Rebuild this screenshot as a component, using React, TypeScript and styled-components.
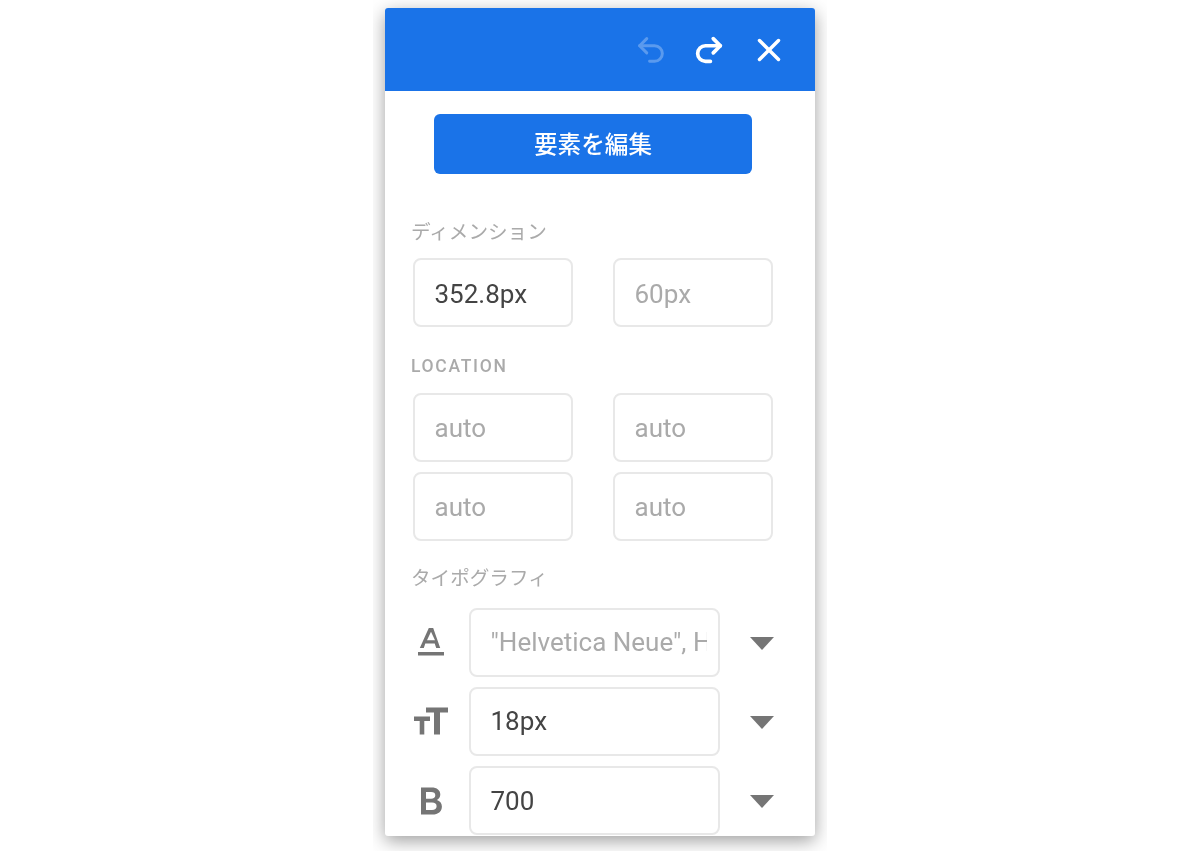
import React from "react";
import styled, { createGlobalStyle } from "styled-components";
import { Undo2, Redo2, X } from "lucide-react";

const Global = createGlobalStyle`
  html, body { margin: 0; padding: 0; background: #fff; }
  body { font-family: Roboto, "Noto Sans CJK JP", sans-serif; }
`;

const Page = styled.div`
  width: 1200px;
  height: 851px;
  display: flex;
  justify-content: center;
  overflow: hidden;
  background: #fff;
`;

const Stage = styled.div`
  width: 454px;
  height: 851px;
  padding: 8px 12px 15px;
  box-sizing: border-box;
  overflow: hidden;
`;

const Panel = styled.div`
  width: 430px;
  height: 828px;
  background: #fff;
  border-radius: 3px;
  overflow: hidden;
  box-shadow: 0 5px 18px rgba(0, 0, 0, 0.38);
  filter: blur(0.55px);
`;

const Header = styled.div`
  height: 83px;
  background: #1a73e8;
  display: flex;
  align-items: center;
  justify-content: flex-end;
  gap: 24px;
  padding: 0 27px 0 0;
`;

const HeaderIcon = styled.span<{ $dim?: boolean }>`
  display: flex;
  color: #fff;
  opacity: ${(p) => (p.$dim ? 0.28 : 1)};
`;

const Body = styled.div`
  padding: 23px 0 0 26px;
`;

const Primary = styled.button`
  display: block;
  width: 318px;
  height: 60px;
  margin: 0 0 45px 23px;
  padding: 0 0 3px;
  border: 0;
  border-radius: 6px;
  background: #1a73e8;
  color: #fff;
  font: 500 23.6px Roboto, "Noto Sans CJK JP", sans-serif;
`;

const Label = styled.div<{ $latin?: boolean }>`
  height: 28px;
  line-height: 28px;
  color: #aaa;
  font-size: ${(p) => (p.$latin ? "17.5px" : "19.6px")};
  font-weight: ${(p) => (p.$latin ? 500 : 400)};
  letter-spacing: ${(p) => (p.$latin ? "1.7px" : "0")};
`;

const Grid = styled.div<{ $top: number }>`
  display: grid;
  grid-template-columns: 160px 160px;
  column-gap: 40px;
  row-gap: 10px;
  margin: ${(p) => p.$top}px 0 0 2px;
`;

const Field = styled.div<{ $muted?: boolean; $low?: boolean }>`
  height: 69px;
  box-sizing: border-box;
  border: 2px solid #e8e8e8;
  border-radius: 8px;
  padding: ${(p) => (p.$low ? "3px" : "0")} 11px 0 19.5px;
  display: flex;
  align-items: center;
  font-size: 26px;
  color: ${(p) => (p.$muted ? "#aaa" : "#444")};
`;

const Value = styled.span`
  display: block;
  flex: 1;
  min-width: 0;
  line-height: 36px;
  overflow: hidden;
  white-space: nowrap;
`;

const Section = styled.div<{ $top: number }>`
  margin-top: ${(p) => p.$top}px;
`;

const Rows = styled.div`
  display: flex;
  flex-direction: column;
  gap: 10.3px;
  margin-top: 15px;
`;

const Row = styled.div`
  display: grid;
  grid-template-columns: 40px 251px 56px;
  column-gap: 18px;
  align-items: center;
`;

const TypeIcon = styled.span`
  display: flex;
  justify-content: center;
`;

const Arrow = styled.span`
  width: 0;
  height: 0;
  margin: 2px 0 0 12px;
  border-left: 12.5px solid transparent;
  border-right: 12.5px solid transparent;
  border-top: 13px solid #757575;
`;

const locationFields = ["auto", "auto", "auto", "auto"];

const FontIcon = () => (
  <svg width="30" height="30" viewBox="0 0 30 30" fill="#757575">
    <path
      fillRule="evenodd"
      d="M12.8 1h4.4l7 20h-4l-1.5-4.5H9.300L7.8 21h-4zM11 13.200h8L15 4.800z"
    />
    <rect x="2" y="25" width="26" height="3.500" />
  </svg>
);

const SizeIcon = () => (
  <svg width="36" height="30" viewBox="0 0 36 30" fill="#757575">
    <path d="M13 1.500h22v5h-8v22h-6v-22h-8z" />
    <path d="M1 10.500h16v4.500h-5.700v13.500H6.700V15H1z" />
  </svg>
);

const BoldIcon = () => (
  <svg width="26" height="30" viewBox="0 0 26 30" fill="#757575">
    <path
      fillRule="evenodd"
      d="M3 1.500h10.500c5.500 0 8.800 2.700 8.800 7 0 2.600-1.300 4.500-3.400 5.500 2.900.9 5 3.200 5 6.400 0 5-3.800 8.100-9.400 8.100H3zM8 6v6.700h5.100c2.700 0 4.200-1.300 4.200-3.500 0-2-1.500-3.200-4.200-3.200zM8 16.500V24h6c3 0 4.600-1.400 4.600-3.800 0-2.400-1.600-3.700-4.600-3.700z"
    />
  </svg>
);

const rows = [
  { icon: <FontIcon />, text: '"Helvetica Neue", Helvetica', muted: true },
  { icon: <SizeIcon />, text: "18px" },
  { icon: <BoldIcon />, text: "700" },
];

export default function App() {
  return (
    <Page>
      <Global />
      <Stage>
        <Panel>
          <Header>
            <HeaderIcon $dim><Undo2 size={34} strokeWidth={2.1} /></HeaderIcon>
            <HeaderIcon><Redo2 size={34} strokeWidth={2.6} /></HeaderIcon>
            <HeaderIcon><X size={38} strokeWidth={2.2} /></HeaderIcon>
          </Header>
          <Body>
            <Primary>要素を編集</Primary>
            <Label>ディメンション</Label>
            <Grid $top={10.5}>
              <Field $low><Value>352.8px</Value></Field>
              <Field $low $muted><Value>60px</Value></Field>
            </Grid>
            <Section $top={25.5}>
              <Label $latin>LOCATION</Label>
              <Grid $top={13}>
                {locationFields.map((v, i) => (
                  <Field $muted key={i}><Value>{v}</Value></Field>
                ))}
              </Grid>
            </Section>
            <Section $top={23.5}>
              <Label>タイポグラフィ</Label>
              <Rows>
                {rows.map((r) => (
                  <Row key={r.text}>
                    <TypeIcon>{r.icon}</TypeIcon>
                    <Field $muted={r.muted}><Value>{r.text}</Value></Field>
                    <Arrow />
                  </Row>
                ))}
              </Rows>
            </Section>
          </Body>
        </Panel>
      </Stage>
    </Page>
  );
}
